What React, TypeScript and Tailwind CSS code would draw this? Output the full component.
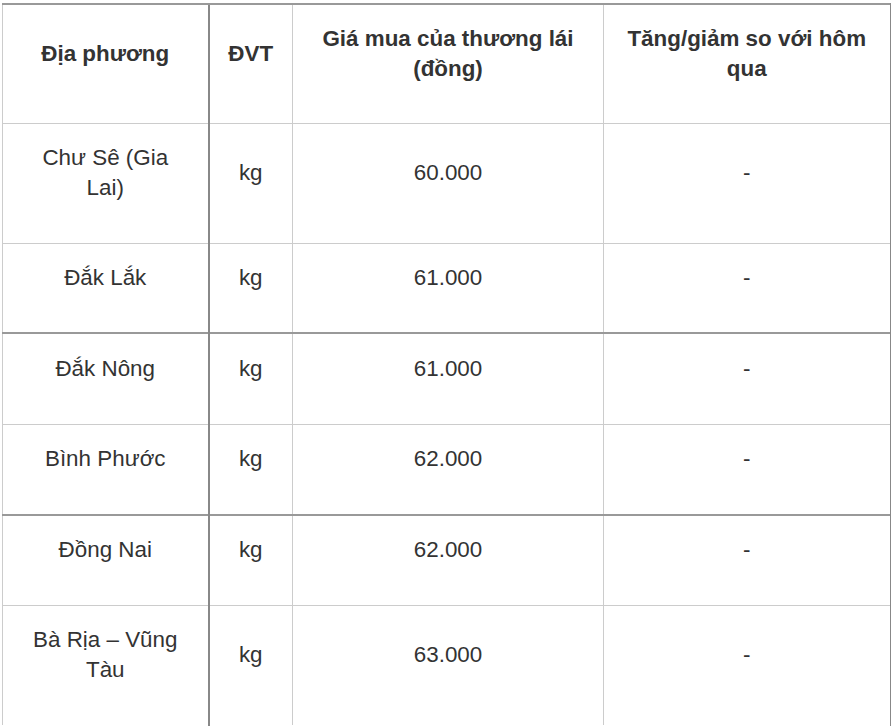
const rows = [
  { place: "Chư Sê (Gia Lai)", price: "60.000", h: "h-[120px]", dark: false, last: false },
  { place: "Đắk Lắk", price: "61.000", h: "h-[90px]", dark: false, last: false },
  { place: "Đắk Nông", price: "61.000", h: "h-[91px]", dark: true, last: false },
  { place: "Bình Phước", price: "62.000", h: "h-[91px]", dark: false, last: false },
  { place: "Đồng Nai", price: "62.000", h: "h-[90px]", dark: true, last: false },
  { place: "Bà Rịa – Vũng Tàu", price: "63.000", h: "h-[120px]", dark: false, last: true },
];

export default function App() {
  return (
    <div className="min-h-[727px] bg-white pl-[2px] pt-[3px] font-['Liberation_Sans',Arial,sans-serif] text-[22.4px] leading-[30px] text-[#333]">
      <table className="w-[888px] table-fixed border-collapse text-center">
        <colgroup>
          <col className="w-[206px]" />
          <col className="w-[84px]" />
          <col className="w-[311px]" />
          <col className="w-[287px]" />
        </colgroup>
        <thead>
          <tr className="h-[119px] font-bold">
            <th className="border border-[#ccc] border-t-2 border-t-[#999] px-[20px] pb-[20px] align-middle">Địa phương</th>
            <th className="border border-[#ccc] border-t-2 border-t-[#999] border-l-2 border-l-[#888] px-2 pb-[20px] align-middle">ĐVT</th>
            <th className="border border-[#ccc] border-t-2 border-t-[#999] px-[20px] pb-[20px] align-middle">
              Giá mua của thương lái (đồng)
            </th>
            <th className="border border-[#ccc] border-t-2 border-t-[#999] border-r-2 border-r-[#888] px-[20px] pb-[20px] align-middle">
              Tăng/giảm so với hôm qua
            </th>
          </tr>
        </thead>
        <tbody>
          {rows.map((r) => {
            const edge = `${r.dark ? "border-t-2 border-t-[#999]" : ""} ${r.last ? "border-b-white" : ""}`;
            return (
              <tr key={r.place} className={r.h}>
                <td className={`border border-[#ccc] px-[22px] pb-[20px] align-middle ${edge}`}>{r.place}</td>
                <td className={`border border-[#ccc] border-l-2 border-l-[#888] pb-[20px] align-middle ${edge}`}>kg</td>
                <td className={`border border-[#ccc] pb-[20px] align-middle ${edge}`}>{r.price}</td>
                <td className={`border border-[#ccc] border-r-2 border-r-[#888] pb-[20px] align-middle ${edge}`}>-</td>
              </tr>
            );
          })}
        </tbody>
      </table>
    </div>
  );
}
